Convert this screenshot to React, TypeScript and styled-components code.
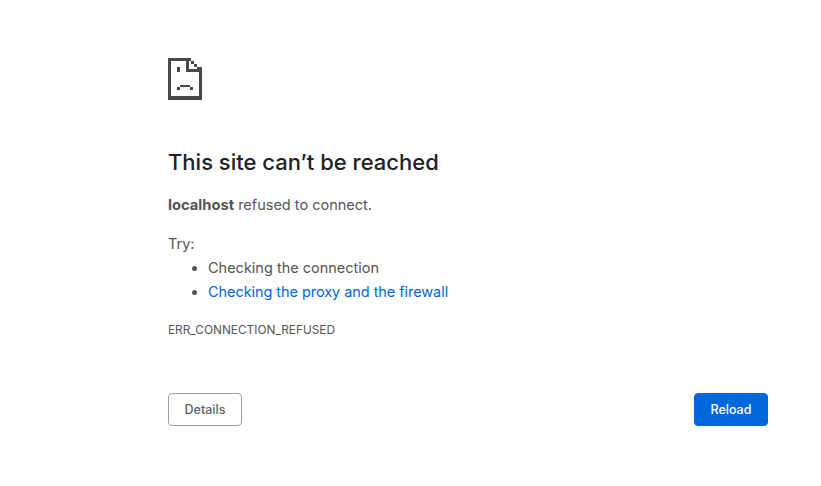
import React from "react";
import styled, { createGlobalStyle } from "styled-components";

const Global = createGlobalStyle`
  html, body { margin: 0; padding: 0; background: #fff; }
  body { font-family: Inter, "Liberation Sans", sans-serif; color: #555; }
`;

const Page = styled.main`
  width: 600px;
  margin: 0 0 0 168px;
  padding-top: 58px;
  height: 486px;
  box-sizing: border-box;
`;

const IconSvg = styled.svg`
  display: block;
  width: 34px;
  height: 42px;
`;

const Title = styled.h1`
  margin: 48px 0 0;
  font-size: 22px;
  line-height: 28px;
  font-weight: 500;
  color: #202124;
`;

const Summary = styled.p`
  margin: 19px 0 0;
  font-size: 14.5px;
  line-height: 20px;
`;

const Host = styled.strong`
  font-weight: 700;
  font-size: 14.7px;
`;

const TryLabel = styled.p`
  margin: 19px 0 0;
  font-size: 14.5px;
  line-height: 20px;
`;

const Suggestions = styled.ul`
  margin: 2px 0 0;
  padding: 0 0 0 40px;
  font-size: 14.5px;
  line-height: 24px;
`;

const ProxyLink = styled.a`
  color: #0066de;
  text-decoration: none;
  letter-spacing: -0.06px;
`;

const Code = styled.div`
  margin-top: 18px;
  font-size: 11.85px;
  line-height: 16px;
`;

const Actions = styled.div`
  display: flex;
  justify-content: space-between;
  margin-top: 55px;
`;

const Button = styled.button<{ $primary?: boolean }>`
  height: 33px;
  width: 74px;
  box-sizing: border-box;
  padding: 0;
  font: 500 12.5px Inter, "Liberation Sans", sans-serif;
  border-radius: 4px;
  border: 1px solid ${(p) => (p.$primary ? "#0066de" : "#9aa0a6")};
  background: ${(p) => (p.$primary ? "#0066de" : "#fff")};
  color: ${(p) => (p.$primary ? "#fff" : "#5f6368")};
`;

const SadPage = () => (
  <IconSvg viewBox="0 0 34 42" aria-hidden="true" shapeRendering="crispEdges">
    <path
      fill="#484848"
      fillRule="evenodd"
      d="M0 0H23V3H26V6H29V9H34V42H0ZM3 3V38H31V14H18V3ZM21 3V11H29V9H26V6H23V3Z"
    />
    <path fill="#484848" d="M9 9H12V14H9ZM12 27H22V29H12ZM9 29H12V32H9ZM22 29H25V32H22Z" />
  </IconSvg>
);

export default function App() {
  return (
    <Page>
      <Global />
      <SadPage />
      <Title>This site can’t be reached</Title>
      <Summary>
        <Host>localhost</Host> refused to connect.
      </Summary>
      <TryLabel>Try:</TryLabel>
      <Suggestions>
        <li>Checking the connection</li>
        <li>
          <ProxyLink href="#">Checking the proxy and the firewall</ProxyLink>
        </li>
      </Suggestions>
      <Code>ERR_CONNECTION_REFUSED</Code>
      <Actions>
        <Button>Details</Button>
        <Button $primary>Reload</Button>
      </Actions>
    </Page>
  );
}
